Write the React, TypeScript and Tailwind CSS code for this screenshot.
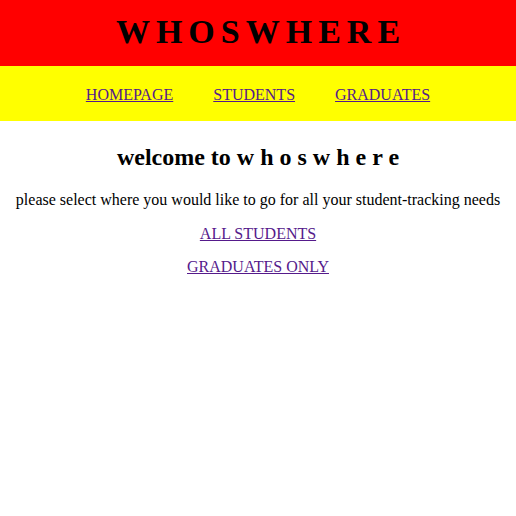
export default function App() {
  const serif = { fontFamily: '"Liberation Serif", "Times New Roman", serif' };
  return (
    <div className="min-h-[516px] bg-white text-black" style={serif}>
      <div className="bg-[#ff0000] h-[66px] flex items-center justify-center">
        <h1 className="text-[34px] font-bold tracking-[6px] leading-none pl-[6px] pb-[3px]">WHOSWHERE</h1>
      </div>
      <nav className="bg-[#ffff00] h-[55px] flex items-center justify-center gap-[40px] text-[16px] pt-[3px]">
        <a href="#" className="underline text-[#551a8b]">HOMEPAGE</a>
        <a href="#" className="underline text-[#551a8b]">STUDENTS</a>
        <a href="#" className="underline text-[#551a8b]">GRADUATES</a>
      </nav>
      <div className="flex flex-col items-center text-center">
        <h2 className="text-[24px] font-bold leading-[28px] mt-[22px]">welcome to w h o s w h e r e</h2>
        <p className="text-[16px] leading-[18px] mt-[20px]">please select where you would like to go for all your student-tracking needs</p>
        <a href="#" className="underline text-[#551a8b] text-[16px] leading-[18px] mt-[16px]">ALL STUDENTS</a>
        <a href="#" className="underline text-[#551a8b] text-[16px] leading-[18px] mt-[15px]">GRADUATES ONLY</a>
      </div>
    </div>
  );
}
